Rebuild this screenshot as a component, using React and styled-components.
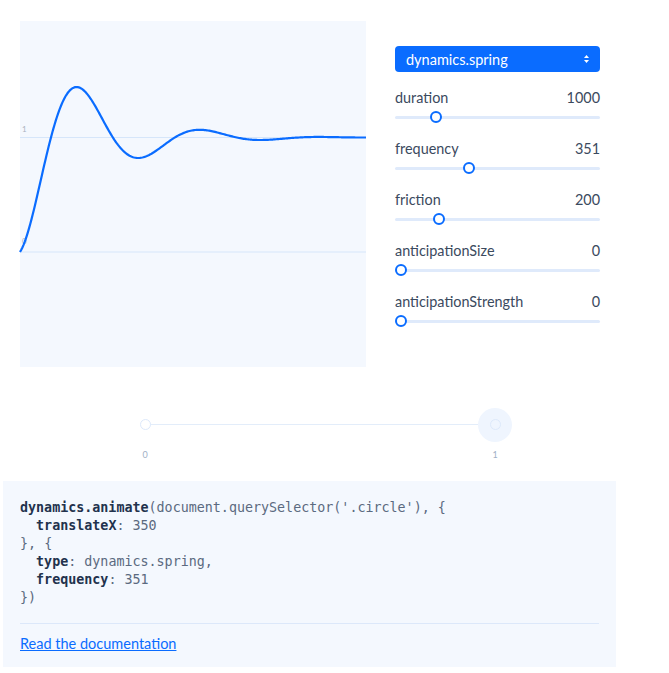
import React from 'react';
import styled, { createGlobalStyle } from 'styled-components';

const Blue = '#0a6cff';
const Track = '#dfeafb';
const Panel = '#f4f8fe';
const Ink = '#3b4a5e';
const Navy = '#22324d';

const GlobalStyle = createGlobalStyle`
  html, body {
    margin: 0;
    padding: 0;
    background: #ffffff;
  }
  body {
    font-family: 'Lato', 'Noto Sans', sans-serif;
    color: ${Ink};
  }
`;

const Page = styled.div`
  width: 669px;
  padding: 0 3px;
  box-sizing: border-box;
`;

const TopRow = styled.div`
  display: flex;
  align-items: flex-start;
  padding: 21px 0 0 17px;
  gap: 29px;
`;

const Graph = styled.div`
  width: 346px;
  height: 346px;
  background: ${Panel};
  flex: none;
`;

const GraphSvg = styled.svg`
  display: block;
  overflow: visible;
`;

const Controls = styled.div`
  width: 205px;
  padding-top: 25px;
  display: flex;
  flex-direction: column;
`;

const Select = styled.div`
  height: 26px;
  border-radius: 4px;
  background: ${Blue};
  color: #ffffff;
  display: flex;
  align-items: center;
  justify-content: space-between;
  padding: 0 10px 0 11px;
  font-size: 14.5px;
  margin-bottom: 17px;
`;

const Field = styled.div`
  height: 51px;
  display: flex;
  flex-direction: column;
`;

const FieldHead = styled.div`
  display: flex;
  justify-content: space-between;
  font-size: 14.4px;
  line-height: 18px;
  color: ${Ink};
`;

const Slider = styled.div`
  position: relative;
  margin-top: 4px;
  height: 12px;
  &::before {
    content: '';
    position: absolute;
    left: 0;
    right: 0;
    top: 5px;
    height: 3px;
    border-radius: 2px;
    background: ${Track};
  }
`;

const Thumb = styled.span`
  position: absolute;
  top: 0;
  width: 12px;
  height: 12px;
  margin-left: -6px;
  box-sizing: border-box;
  border-radius: 50%;
  border: 2.5px solid ${Blue};
  background: #ffffff;
`;

const Timeline = styled.div`
  height: 114px;
  display: flex;
  justify-content: flex-start;
  padding-left: 142px;
  padding-top: 45px;
  box-sizing: border-box;
`;

const TimeTrack = styled.div`
  position: relative;
  width: 350px;
  height: 46px;
  &::before {
    content: '';
    position: absolute;
    left: 0;
    right: 0;
    top: 12px;
    height: 1px;
    background: #e3edfa;
  }
`;

const Dot = styled.span`
  position: absolute;
  top: 7px;
  left: ${p => p.$at}px;
  width: 11px;
  height: 11px;
  margin-left: -5.5px;
  box-sizing: border-box;
  border-radius: 50%;
  border: 1.5px solid #dde9fb;
  background: ${p => (p.$active ? 'transparent' : '#ffffff')};
`;

const Halo = styled.span`
  position: absolute;
  top: -4px;
  left: ${p => p.$at}px;
  width: 34px;
  height: 34px;
  margin-left: -17px;
  border-radius: 50%;
  background: #eff5fe;
`;

const TickLabel = styled.span`
  position: absolute;
  top: 37px;
  left: ${p => p.$at}px;
  transform: translateX(-50%);
  font-size: 9px;
  color: #9fb0c6;
`;

const CodeBox = styled.div`
  width: 613px;
  box-sizing: border-box;
  background: ${Panel};
  padding: 18px 17px 15px 17px;
`;

const Code = styled.pre`
  margin: 0;
  font-family: 'DejaVu Sans Mono', 'Liberation Mono', monospace;
  font-size: 13.35px;
  line-height: 18px;
  color: #5b6a80;
  padding-bottom: 16px;
  border-bottom: 1px solid #dce8fa;
`;

const Key = styled.b`
  color: ${Navy};
  font-weight: bold;
`;

const DocLink = styled.a`
  display: inline-block;
  margin-top: 11px;
  font-size: 14.5px;
  color: ${Blue};
  text-decoration: underline;
`;

const spring = (t, freq, fric) => {
  const f = Math.max(1, freq / 20);
  const r = Math.pow(20, fric / 100);
  return 1 - Math.pow(r / 10, -t) * (1 - t) * Math.cos(f * t);
};

const SpringCurve = () => {
  const size = 346;
  const zero = 231;
  const unit = 114.5;
  const pts = [];
  for (let i = 0; i <= 300; i++) {
    const t = i / 300;
    const y = spring(t, 351, 200);
    pts.push(`${(t * size).toFixed(2)},${(zero - y * unit).toFixed(2)}`);
  }
  return (
    <GraphSvg width={size} height={size}>
      <line x1="0" x2={size} y1={zero - unit} y2={zero - unit} stroke="#d6e6fa" strokeWidth="1" />
      <line x1="0" x2={size} y1={zero} y2={zero} stroke="#d6e6fa" strokeWidth="1" />
      <text x="2" y={zero - unit - 6} fontSize="8" fill="#a9b3c0" fontFamily="Lato, sans-serif">1</text>
      <text x="2" y={zero - 8} fontSize="8" fill="#a9b3c0" fontFamily="Lato, sans-serif">0</text>
      <polyline points={pts.join(' ')} fill="none" stroke={Blue} strokeWidth="2.2" strokeLinejoin="round" />
    </GraphSvg>
  );
};

const Arrows = () => (
  <svg width="7" height="10" viewBox="0 0 7 10">
    <path d="M3.5 1 L6 4 H1 Z" fill="#ffffff" />
    <path d="M3.5 9 L6 6 H1 Z" fill="#ffffff" />
  </svg>
);

const params = [
  { name: 'duration', value: 1000, min: 100, max: 5000 },
  { name: 'frequency', value: 351, min: 0, max: 1000 },
  { name: 'friction', value: 200, min: 1, max: 1000 },
  { name: 'anticipationSize', value: 0, min: 0, max: 1000 },
  { name: 'anticipationStrength', value: 0, min: 0, max: 1000 }
];

const Param = ({ name, value, min, max }) => {
  const frac = (value - min) / (max - min);
  return (
    <Field>
      <FieldHead>
        <span>{name}</span>
        <span>{value}</span>
      </FieldHead>
      <Slider>
        <Thumb style={{ left: `calc(6px + (100% - 12px) * ${frac})` }} />
      </Slider>
    </Field>
  );
};

export default function App() {
  return (
    <Page>
      <GlobalStyle />
      <TopRow>
        <Graph>
          <SpringCurve />
        </Graph>
        <Controls>
          <Select>
            <span>dynamics.spring</span>
            <Arrows />
          </Select>
          {params.map(p => (
            <Param key={p.name} {...p} />
          ))}
        </Controls>
      </TopRow>
      <Timeline>
        <TimeTrack>
          <Halo $at={350} />
          <Dot $at={0} />
          <Dot $at={350} $active />
          <TickLabel $at={0}>0</TickLabel>
          <TickLabel $at={350}>1</TickLabel>
        </TimeTrack>
      </Timeline>
      <CodeBox>
        <Code>
          <Key>dynamics.animate</Key>(document.querySelector('.circle'), {'{'}
          {'\n  '}<Key>translateX</Key>: 350
          {'\n'}{'}'}, {'{'}
          {'\n  '}<Key>type</Key>: dynamics.spring,
          {'\n  '}<Key>frequency</Key>: 351
          {'\n'}{'})'}
        </Code>
        <DocLink href="#">Read the documentation</DocLink>
      </CodeBox>
    </Page>
  );
}
